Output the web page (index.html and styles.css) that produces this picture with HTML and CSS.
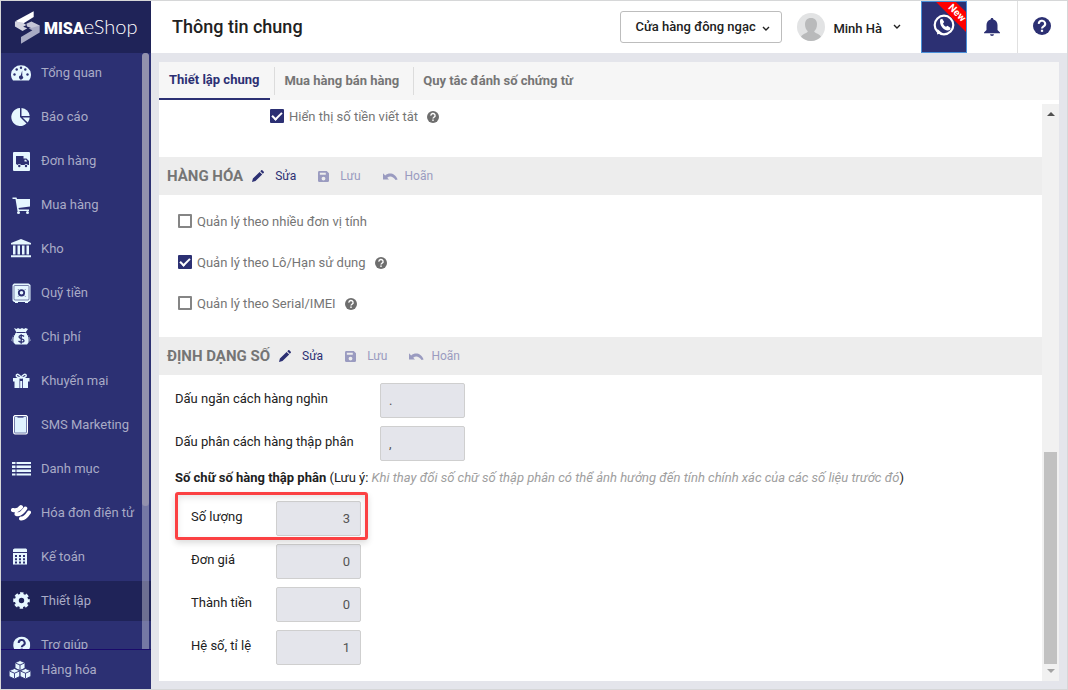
FILE: index.html
```html
<!DOCTYPE html>
<html lang="vi">
<head>
<meta charset="utf-8">
<title>MISA eShop - Thông tin chung</title>
<link rel="stylesheet" href="styles.css">
</head>
<body>
<svg class="defs" aria-hidden="true">
  <symbol id="i-help" viewBox="0 0 24 24"><circle cx="12" cy="12" r="12" fill="currentColor"/><path d="M7.800 9.200a4.200 4 0 1 1 6.400 3.200c-1.500 1-2.200 1.400-2.200 2.800" fill="none" stroke="var(--mark)" stroke-width="2.800"/><rect x="10.500" y="17" width="3" height="2.800" fill="var(--mark)"/></symbol>
  <symbol id="i-pencil" viewBox="0 0 12 12"><path fill="currentColor" d="M0 12l.9-3.500L7.600 1.900l2.600 2.500-6.700 6.700zM8.300 1.200l1-1c.3-.3.700-.3 1 0l1.500 1.500c.3.300.3.700 0 1l-1 1z"/></symbol>
  <symbol id="i-save" viewBox="0 0 12 12"><path fill="currentColor" fill-rule="evenodd" d="M1.500 0h8L12 2.500v8A1.500 1.500 0 0 1 10.500 12h-9A1.500 1.500 0 0 1 0 10.500v-9A1.500 1.500 0 0 1 1.500 0zM2 1.800V4.200h6.500V1.800zM6 6.200a2.100 2.100 0 1 0 0 4.200 2.100 2.100 0 0 0 0-4.200z"/></symbol>
  <symbol id="i-undo" viewBox="0 0 15 9"><path fill="currentColor" d="M0 1.200v6.300h6L4.200 5.700C6.700 3.500 10 4 12.600 8l2-.6C12 .8 6 .2 2.200 3.400z"/></symbol>
  <symbol id="i-chevron" viewBox="0 0 8 6"><path d="M1 1l3 3 3-3" fill="none" stroke="currentColor" stroke-width="1.400"/></symbol>
</svg>
<div class="app">
  <aside class="sidebar">
    <a class="brand" href="#">
      <svg class="brand-mark" viewBox="16 8 82 104">
        <path fill="#fff" d="M78 9v18L44 48 20 40z"/>
        <path fill="#d3d4e0" d="M19 41l24 3 12 8-10 6 13 4-15 9-24-14z"/>
        <path fill="#c5c6d6" d="M55 48l16-7 26 13-4 6-18 6-7-5-11-4z"/>
        <path fill="#a9abc4" d="M97 54v22l-59 35V90l36-21-12-6 14-3z"/>
      </svg>
      <span class="brand-name"><span class="brand-bold">MISA</span><span class="brand-light">eShop</span></span>
    </a>
    <div class="nav-wrap">
      <nav class="nav">
        <a class="item" href="#"><svg viewBox="0 0 20 20"><path fill="#e6f7ff" d="M2 17.500a10 9.500 0 1 1 16 0z"/><g fill="#2c3073"><circle cx="3.500" cy="11.500" r="1.200"/><circle cx="5.700" cy="6.500" r="1.200"/><circle cx="10" cy="4.700" r="1.200"/><circle cx="14.300" cy="6.500" r="1.200"/><circle cx="16.500" cy="11.500" r="1.200"/><path d="M11.200 7.500l-1.500 5a2 2 0 1 0 1.600.4z"/></g></svg>Tổng quan</a>
        <a class="item" href="#"><svg viewBox="0 0 20 20"><g fill="#e6f7ff"><path d="M9 1v9l6.500 6.500A9 9 0 1 1 9 1z"/><path d="M10.500 1a8.500 8.500 0 0 1 8.200 8h-8.200z"/><path d="M11.500 10.500h7.200a9 9 0 0 1-2 5z"/></g></svg>Báo cáo</a>
        <a class="item" href="#"><svg viewBox="0 0 20 20"><rect x="2" y="1" width="17" height="19" rx="1" fill="#e6f7ff"/><path fill="#2c3073" d="M5 5h7.500v2.500h3L18 10v4h-1.200a1.800 1.800 0 0 0-3.300 0H10a1.800 1.800 0 0 0-3.300 0L5 13z"/><path fill="#e6f7ff" d="M13.500 8.700H15l1.200 1.800h-2.700z"/><circle cx="8.300" cy="15" r="1.200" fill="#2c3073"/><circle cx="15" cy="15" r="1.200" fill="#2c3073"/></svg>Đơn hàng</a>
        <a class="item" href="#"><svg viewBox="0 0 20 20"><path fill="#e6f7ff" d="M1.500 2.500h4L6 4h13v7.500L7.500 13l.5 1.500h10V16H6.500L4.500 4h-3z"/><circle cx="7.500" cy="17.500" r="1.500" fill="#e6f7ff"/><circle cx="16.500" cy="17.500" r="1.500" fill="#e6f7ff"/></svg>Mua hàng</a>
        <a class="item" href="#"><svg viewBox="0 0 20 20"><path fill="#e6f7ff" d="M10 0l10 4v1.500H0V4zM2 6.500h2.500v9H2zM6.500 6.500H9v9H6.500zM11 6.500h2.500v9H11zM15.500 6.500H18v9h-2.500zM0 16.300h20v2H0z"/></svg>Kho</a>
        <a class="item" href="#"><svg viewBox="0 0 20 20"><path fill="#e6f7ff" d="M3 .5h14.500L19.500 2v15.500l-2 1.500h-.5v1h-3v-1H7v1H4v-1H3l-1.500-1.500V2z"/><rect x="3" y="2.500" width="15" height="14.500" rx="1" fill="none" stroke="#2c3073" stroke-width=".6"/><circle cx="10.500" cy="9.800" r="2.700" fill="none" stroke="#2c3073" stroke-width="1.800"/><path d="M7 6.200l1 1m5.500 5.500l1 1m0-7.500l-1 1M7 13.700l1-1" stroke="#2c3073" stroke-width=".7"/></svg>Quỹ tiền</a>
        <a class="item" href="#"><svg viewBox="0 0 20 20"><path fill="#e6f7ff" d="M3 1l2.500 1L7 1l2 1 2-1 2 1 1.500-1L17 2l-2.500 3.500c3 2 4.500 5 5 8L18 15l-2 2.500H4.500L2 15 .5 13.500c.5-3 2-6 5-8z"/><path d="M5.500 5.500h9M3.800 7C2 9 1.500 12 2 15.500M16.200 7c1.800 2 2.300 5 1.800 8.500" stroke="#2c3073" fill="none"/><path d="M13 9.500c-1.500-1.500-5-1.500-5 .6s5 1.300 5 3.500-4 2-5.500.4M10.200 7.200v9.500" stroke="#2c3073" stroke-width="1.300" fill="none"/></svg>Chi phí</a>
        <a class="item" href="#"><svg viewBox="0 0 20 20"><path fill="#e6f7ff" d="M2 7h16.500v3.500H17V17h-5V7H8.500v10H3.500v-6.500H2zM9.200 10h2v7h-2z"/><path fill="none" stroke="#e6f7ff" stroke-width="1.500" d="M10.200 7C8 7 4.800 6 5.300 4.200S9 3.500 10.200 7zM10.200 7c2 0 5.500-1 5-2.800S11.200 3.500 10.200 7z"/></svg>Khuyến mại</a>
        <a class="item" href="#"><svg viewBox="0 0 20 20"><rect x="2.500" y=".5" width="14" height="18.500" rx="1.500" fill="#dff3ff" stroke="#fff"/><rect x="3.500" y="1.500" width="12" height="16.500" rx="1" fill="none" stroke="#2c3073" stroke-width=".6"/><path d="M6.500 2h6" stroke="#2c3073" stroke-width="1.200"/></svg>SMS Marketing</a>
        <a class="item" href="#"><svg viewBox="0 0 20 20"><path fill="#e6f7ff" d="M1 3h3.500v2H1zM5.500 3H20v2H5.500zM1 6.500h3.500v2.500H1zM5.500 6.500H20v2.500H5.500zM1 10.500h3.500V13H1zM5.500 10.500H20V13H5.500zM1 14.500h3.500v2H1zM5.500 14.500H20v2H5.500z"/></svg>Danh mục</a>
        <a class="item" href="#"><svg viewBox="0 0 20 20"><path fill="none" stroke="#fff" stroke-width="4" stroke-linecap="round" d="M2 7C5 8 8 6.500 10 4M5.500 11C8.500 12 12 9 14.300 5.500M10 15.500c3 .5 6-3 8-6"/></svg>Hóa đơn điện tử</a>
        <a class="item" href="#"><svg viewBox="0 0 20 20"><path fill="#e6f7ff" fill-rule="evenodd" d="M3.500 1.500H15l1 1v2.500H2V2.500zM2 6h14v11.500H2zM4 8v2h2V8zm4 0v2h2V8zm4 0v2h2V8zM4 11.200v2h2v-2zm4 0v2h2v-2zm4 0v2h2v-2zM4 14.500v2h2v-2zm4 0v2h2v-2zm4 0v2h2v-2z"/></svg>Kế toán</a>
        <a class="item active" href="#" aria-current="page"><svg viewBox="0 0 20 20"><circle cx="10.500" cy="9.500" r="4.700" fill="none" stroke="#e6f7ff" stroke-width="4"/><circle cx="10.500" cy="9.500" r="7" fill="none" stroke="#e6f7ff" stroke-width="2.600" stroke-dasharray="3.300 2.200" stroke-dashoffset="1.600"/></svg>Thiết lập</a>
        <a class="item" href="#"><svg class="navhelp" viewBox="-3 -2 28 28"><use href="#i-help" width="24" height="24"/></svg>Trợ giúp</a>
      </nav>
      <div class="nav-scroll"><div class="nav-thumb"></div></div>
    </div>
    <a class="item bottom" href="#"><svg viewBox="0 0 22 20"><g fill="#e6f7ff" stroke="#2c3073" stroke-width=".9"><path d="M11 .5l5 2.200v5.600l-5 2.400-5-2.400V2.700z"/><path d="M5.500 8.500l5.400 2.300v5.600l-5.400 2.600-5.400-2.600v-5.600z"/><path d="M16.500 8.500l5.400 2.300v5.600L16.500 19l-5.400-2.600v-5.600z"/><path fill="none" d="M6.500 3l4.500 2 4.500-2M11 5v5M.8 11.200l4.700 2 4.700-2M5.500 13.200v5.300M11.800 11.200l4.700 2 4.700-2M16.500 13.200v5.300"/></g></svg>Hàng hóa</a>
  </aside>

  <div class="main">
    <header class="top">
      <h1 class="title">Thông tin chung</h1>
      <div class="store">
        <select class="store-select" aria-label="Cửa hàng"><option>Cửa hàng đông ngạc</option></select>
        <svg class="store-arrow chev"><use href="#i-chevron"/></svg>
      </div>
      <button class="user" type="button">
        <svg class="avatar" viewBox="0 0 28 28"><circle cx="14" cy="14" r="14" fill="#e2e3e4"/><path fill="#b9babb" d="M14 5c4 0 6 2.600 6 6.300 0 3.400-1.200 5.500-2.800 7 .3 2 4.800 2 6.800 5.500A14 14 0 0 1 4 23.800c2-3.500 6.500-3.500 6.800-5.500C9.200 16.800 8 14.700 8 11.300 8 7.600 10 5 14 5z"/></svg>
        <span class="user-name">Minh Hà</span>
        <svg class="chev"><use href="#i-chevron"/></svg>
      </button>
      <button class="phone" type="button" aria-label="Hỗ trợ">
        <svg class="phone-icon" viewBox="0 0 22 22"><circle cx="11" cy="11" r="9.300" fill="none" stroke="#fff" stroke-width="2.200"/><path fill="#fff" d="M4.500 15l-.5 5.500 5-1.500zM7.200 5.500l2-.8 2 3.300-1.200 1.400c.5 1.500 1.500 2.700 3 3.400l1.500-1 3.200 2.300-1 1.900c-4.500 2-11-4-9.500-10.500z"/></svg>
        <span class="ribbon">New</span>
      </button>
      <button class="icon-btn bell" type="button" aria-label="Thông báo"><svg viewBox="0 0 16 18"><path fill="#2c3073" d="M8 0c1 0 1.400.7 1.400 1.500C12 2.200 13.500 4.500 13.500 7v5l2.500 2.500v.8H0v-.8L2.500 12V7c0-2.500 1.500-4.800 4.100-5.500C6.600.7 7 0 8 0zM6 16.300h4a2 1.700 0 0 1-4 0z"/></svg></button>
      <button class="icon-btn ask" type="button" aria-label="Trợ giúp"><svg><use href="#i-help"/></svg></button>
    </header>

    <section class="panel">
      <nav class="tabs">
        <a class="tab current" href="#">Thiết lập chung</a>
        <a class="tab" href="#">Mua hàng bán hàng</a>
        <a class="tab" href="#">Quy tắc đánh số chứng từ</a>
      </nav>
      <div class="body">
        <div class="content">
          <div class="check short"><input type="checkbox" id="c0" checked><label for="c0">Hiển thị số tiền viết tắt</label><svg class="tip"><use href="#i-help"/></svg></div>

          <div class="bar">
            <h2>HÀNG HÓA</h2>
            <button class="act" type="button"><svg class="pencil"><use href="#i-pencil"/></svg>Sửa</button>
            <button class="act" type="button" disabled><svg class="save"><use href="#i-save"/></svg>Lưu</button>
            <button class="act" type="button" disabled><svg class="undo"><use href="#i-undo"/></svg>Hoãn</button>
          </div>
          <div class="checks">
            <div class="check"><input type="checkbox" id="c1"><label for="c1">Quản lý theo nhiều đơn vị tính</label></div>
            <div class="check"><input type="checkbox" id="c2" checked><label for="c2">Quản lý theo Lô/Hạn sử dụng</label><svg class="tip"><use href="#i-help"/></svg></div>
            <div class="check"><input type="checkbox" id="c3"><label for="c3">Quản lý theo Serial/IMEI</label><svg class="tip"><use href="#i-help"/></svg></div>
          </div>

          <div class="bar">
            <h2>ĐỊNH DẠNG SỐ</h2>
            <button class="act" type="button"><svg class="pencil"><use href="#i-pencil"/></svg>Sửa</button>
            <button class="act" type="button" disabled><svg class="save"><use href="#i-save"/></svg>Lưu</button>
            <button class="act" type="button" disabled><svg class="undo"><use href="#i-undo"/></svg>Hoãn</button>
          </div>
          <div class="form">
            <div class="field"><label for="f1">Dấu ngăn cách hàng nghìn</label><input type="text" id="f1" value="." disabled></div>
            <div class="field"><label for="f2">Dấu phân cách hàng thập phân</label><input type="text" id="f2" value="," disabled></div>
            <p class="note"><strong>Số chữ số hàng thập phân</strong> (Lưu ý: <em>Khi thay đổi số chữ số thập phân có thể ảnh hưởng đến tính chính xác của các số liệu trước đó</em>)</p>
            <div class="numbers">
              <div class="field num marked"><label for="n1">Số lượng</label><input type="text" id="n1" value="3" disabled></div>
              <div class="field num"><label for="n2">Đơn giá</label><input type="text" id="n2" value="0" disabled></div>
              <div class="field num"><label for="n3">Thành tiền</label><input type="text" id="n3" value="0" disabled></div>
              <div class="field num"><label for="n4">Hệ số, tỉ lệ</label><input type="text" id="n4" value="1" disabled></div>
            </div>
          </div>
        </div>
        <div class="scroll">
          <svg class="arrow up" viewBox="0 0 8 4"><path d="M0 4l4-4 4 4z" fill="#505050"/></svg>
          <div class="track"><div class="thumb"></div></div>
          <svg class="arrow" viewBox="0 0 8 4"><path d="M0 0l4 4 4-4z" fill="#a3a3a3"/></svg>
        </div>
      </div>
    </section>
  </div>
</div>
</body>
</html>
```

FILE: styles.css
```css
*, *::before, *::after { box-sizing: border-box; }
body { margin: 0; font: 13px/16px Roboto, "Noto Sans", sans-serif; color: #212121; --navy: #2c3073; --mark: #fff; }
button, input, select { font: inherit; color: inherit; }
button { border: 0; padding: 0; background: none; }
a { color: inherit; text-decoration: none; }
svg { flex: none; display: block; }
.defs { position: absolute; width: 0; height: 0; }

.app { display: grid; grid-template: minmax(0, 1fr) / 150px minmax(0, 1fr); height: 100vh; border: 1px solid #d6d7d8; background: #e4e5eb; }

.sidebar { display: flex; flex-direction: column; min-height: 0; background: var(--navy); color: #a9abc6; }
.brand { flex: none; height: 52px; padding-left: 13px; display: flex; align-items: center; background: #1f2358; color: #fff; }
.brand-mark { width: 26px; height: 33px; margin-right: 4px; }
.brand-name { display: flex; align-items: baseline; padding-bottom: 1px; }
.brand-bold { font-weight: 900; font-size: 16px; }
.brand-light { font: 300 20px/20px Lato, sans-serif; }
.nav-wrap { flex: 1; min-height: 0; display: grid; grid-template: minmax(0, 1fr) / minmax(0, 1fr); border-bottom: 1px solid #1a0a6b; }
.nav { grid-area: 1 / 1; overflow: hidden; display: flex; flex-direction: column; gap: 4px; }
.item { flex: none; height: 40px; padding-left: 10px; display: flex; align-items: center; gap: 10px; white-space: nowrap; font-size: 13px; }
.item svg { width: 20px; height: 20px; }
.item.active { background: #1f2358; }
.item .navhelp { color: #e6f7ff; --mark: #2c3073; }
.item.bottom { height: 39px; padding-left: 8px; }
.item.bottom svg { width: 22px; height: 20px; }
.nav-scroll { grid-area: 1 / 1; justify-self: end; width: 7px; margin-right: 2px; background: rgba(255, 255, 255, .35); z-index: 1; border-radius: 4px 4px 0 0; }
.nav-thumb { height: 76%; background: #9291ad; border-radius: 4px; }

.main { display: flex; flex-direction: column; min-width: 0; min-height: 0; }
.top { flex: none; height: 52px; display: flex; align-items: center; background: #fff; }
.title { flex: 1; margin: 0; padding-left: 21px; font-size: 18px; line-height: 24px; font-weight: 500; }
.store { display: grid; align-items: center; }
.store-select { grid-area: 1 / 1; appearance: none; width: 162px; height: 32px; padding: 0 24px 0 14px; border: 1px solid #bdbdbd; border-radius: 3px; background: #fff; font-weight: 500; }
.store-arrow { grid-area: 1 / 1; justify-self: end; margin: 3px 12px 0 0; pointer-events: none; }
.chev { width: 8px; height: 6px; }
.user { display: flex; align-items: center; margin: 0 20px 0 15px; }
.avatar { width: 28px; height: 28px; margin-right: 8px; }
.user-name { font-weight: 500; margin-right: 11px; padding-top: 3px; }
.phone { position: relative; overflow: hidden; width: 46px; height: 52px; display: flex; justify-content: center; padding-top: 12px; background: var(--navy); border: 1px solid #4a90d9; }
.phone-icon { width: 22px; height: 22px; }
.ribbon { position: absolute; top: 4px; right: -24px; width: 66px; background: #f00; color: #fff; font-size: 10px; line-height: 14px; font-weight: 700; transform: rotate(45deg); text-align: center; }
.icon-btn { height: 52px; width: 50px; display: flex; align-items: center; justify-content: center; }
.bell svg { width: 16px; height: 18px; }
.ask { border-left: 1px solid #e0e0e0; padding: 0 2px 2px 0; color: var(--navy); }
.ask svg { width: 18px; height: 18px; }

.panel { flex: 1; min-height: 0; margin: 9px 8px 8px; display: flex; flex-direction: column; background: #fff; }
.tabs { flex: none; height: 38px; display: flex; background: #f6f6f6; color: #757575; font-weight: 700; }
.tab { display: flex; align-items: center; padding: 0 14px 0 9px; }
.tab + .tab::before { content: ""; width: 1px; height: 28px; margin: 0 9px 0 -9px; background: #dcdcdc; }
.tab.current { padding: 0 11px 0 10px; margin-right: 13px; border-bottom: 2px solid var(--navy); color: var(--navy); }
.tab.current + .tab { margin-left: -9px; }
.body { flex: 1; min-height: 0; display: flex; }
.content { flex: 1; min-width: 0; overflow: hidden; }

.check { display: flex; align-items: center; height: 20px; color: #757575; }
.check input { appearance: none; width: 14px; height: 14px; margin: 0 5px 3px 0; border: 2px solid #858585; border-radius: 1px; background: #fff; }
.check input:checked { border: 0; background: var(--navy); display: grid; place-items: center; }
.check input:checked::before { content: ""; width: 10px; height: 6px; border: solid #fff; border-width: 0 0 2px 2px; transform: rotate(-45deg); margin-bottom: 2px; }
.tip { width: 12px; height: 12px; margin-left: 9px; color: #6e6e6e; }
.short { margin: 7px 0 30px; padding-left: 111px; }
.checks { display: grid; gap: 21px; padding: 17px 0 23px 19px; }

.bar { height: 38px; padding-left: 8px; display: flex; align-items: center; background: #ededed; }
.bar h2 { margin: 0 9px 0 0; font-size: 15px; line-height: 20px; font-weight: 700; color: #757575; }
.act { display: flex; align-items: center; color: var(--navy); margin-right: 22px; font-size: 12px; }
.act:disabled { color: #9a9bc0; }
.pencil { width: 12px; height: 12px; margin-right: 11px; }
.save { width: 11px; height: 11px; margin-right: 11px; }
.undo { width: 15px; height: 9px; margin-right: 7px; }

.form { padding: 8px 16px 16px; }
.field { display: flex; align-items: center; height: 35px; margin-bottom: 8px; }
.field label { width: 205px; padding-bottom: 3px; }
.field input { width: 85px; height: 35px; padding: 0 10px 0 8px; border: 1px solid #cfcfcf; border-radius: 2px; background: #e4e5eb; color: #555; }
.note { margin: 0 0 15px; line-height: 17px; }
.note em { color: #9e9e9e; }
.numbers { padding-left: 16px; }
.field.num label { width: 85px; }
.field.num input { text-align: right; }
.marked { position: relative; }
.marked::before { content: ""; position: absolute; left: -16px; top: -9px; width: 193px; height: 48px; border: 3px solid #fb4143; border-radius: 3px; box-shadow: 0 3px 6px rgba(0, 0, 0, .14), inset 0 3px 6px rgba(0, 0, 0, .1); pointer-events: none; }

.scroll { width: 17px; margin-top: 4px; padding: 8px 0; display: flex; flex-direction: column; align-items: center; background: #f1f1f1; }
.arrow { width: 8px; height: 4px; }
.track { flex: 1; align-self: stretch; display: flex; flex-direction: column; justify-content: flex-end; padding: 5px 2px; }
.thumb { height: 39%; background: #c1c1c1; }
```
